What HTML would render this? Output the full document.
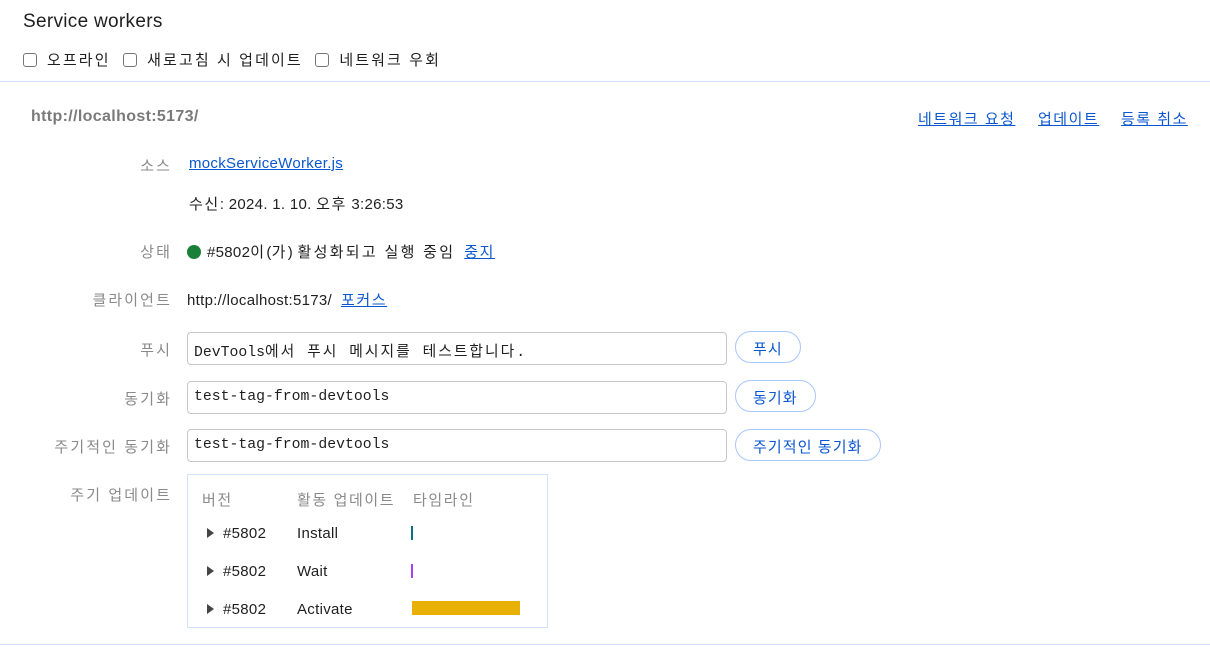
<!DOCTYPE html>
<html><head><meta charset="utf-8"><style>
*{box-sizing:border-box;margin:0;padding:0}
body{width:1210px;height:652px;background:#fff;font-family:"Liberation Sans","Noto Sans CJK KR",sans-serif;font-size:15px;letter-spacing:.3px;color:#1f1f1f;position:relative;overflow:hidden}
.k{letter-spacing:1.6px}
.a{position:absolute;white-space:nowrap}
.lbl{position:absolute;right:1040px;color:#8a8a8a;text-align:right;white-space:nowrap;letter-spacing:2.1px;margin-right:-2px}
a{color:#0b57d0;text-decoration:underline}
.cb{display:inline-block;width:14px;height:14px;border:1.5px solid #757575;border-radius:3px;vertical-align:-2px;margin-right:10px}
.inp{position:absolute;left:187px;width:540px;height:33px;border:1px solid #c7c7c7;border-radius:4px;font-family:"Liberation Mono","Noto Sans CJK KR",monospace;font-size:14.8px;letter-spacing:0;padding:7px 6px;color:#1f1f1f}
.inp .k{letter-spacing:2px}
.btn{position:absolute;left:735px;height:32px;border:1px solid #a8c7fa;border-radius:16px;color:#0b57d0;padding:2px 17px 0;display:flex;align-items:center;letter-spacing:1.1px;white-space:nowrap}
.tri{display:inline-block;width:0;height:0;border-left:7px solid #444;border-top:5px solid transparent;border-bottom:5px solid transparent;margin-right:9px}
</style></head><body>
<div class="a" style="left:23px;top:11px;font-size:19px;letter-spacing:.3px">Service workers</div>
<div class="a" style="left:23px;top:49px;font-size:15px;letter-spacing:2.1px"><span class="cb"></span>오프라인 &nbsp;<span class="cb"></span>새로고침 시 업데이트 &nbsp;<span class="cb"></span>네트워크 우회</div>
<div class="a" style="left:0;top:81px;width:1210px;height:1px;background:#d3e3fd"></div>
<div class="a" style="left:31px;top:108px;font-weight:bold;color:#7a7a7a;font-size:16px;letter-spacing:.35px">http://localhost:5173/</div>
<div class="a" style="left:918px;top:108px;letter-spacing:1.5px"><a>네트워크 요청</a></div>
<div class="a" style="left:1038px;top:108px;letter-spacing:1.5px"><a>업데이트</a></div>
<div class="a" style="left:1121px;top:108px;letter-spacing:1.5px"><a>등록 취소</a></div>

<div class="lbl" style="top:155px">소스</div>
<div class="a" style="left:189px;top:155px"><a>mockServiceWorker.js</a></div>
<div class="a" style="left:189px;top:193px"><span class="k">수신</span>: 2024. 1. 10. <span class="k">오후</span> 3:26:53</div>

<div class="lbl" style="top:241px">상태</div>
<div class="a" style="left:187px;top:241px"><span style="display:inline-block;width:14px;height:14px;border-radius:50%;background:#188038;vertical-align:-2px;margin-right:6px"></span>#5802<span class="k" style="letter-spacing:2.3px">이</span>(<span class="k" style="letter-spacing:2.3px">가</span>) <span style="letter-spacing:2.3px">활성화되고 실행 중임</span> &nbsp;<a class="k">중지</a></div>

<div class="lbl" style="top:289px">클라이언트</div>
<div class="a" style="left:187px;top:289px">http://localhost:5173/ &nbsp;<a class="k">포커스</a></div>

<div class="lbl" style="top:339px">푸시</div>
<div class="inp" style="top:332px">DevTools<span class="k">에서 푸시 메시지를 테스트합니다</span>.</div>
<div class="btn" style="top:331px">푸시</div>

<div class="lbl" style="top:388px">동기화</div>
<div class="inp" style="top:381px">test-tag-from-devtools</div>
<div class="btn" style="top:380px">동기화</div>

<div class="lbl" style="top:436px">주기적인 동기화</div>
<div class="inp" style="top:429px">test-tag-from-devtools</div>
<div class="btn" style="top:429px">주기적인 동기화</div>

<div class="lbl" style="top:484px">주기 업데이트</div>
<div class="a" style="left:187px;top:474px;width:361px;height:154px;border:1px solid #d3e3fd"></div>
<div class="a k" style="left:202px;top:489px;color:#8a8a8a">버전</div>
<div class="a k" style="left:297px;top:489px;color:#8a8a8a">활동 업데이트</div>
<div class="a k" style="left:413px;top:489px;color:#8a8a8a">타임라인</div>

<div class="a" style="left:207px;top:525px"><span class="tri"></span>#5802</div>
<div class="a" style="left:297px;top:525px">Install</div>
<div class="a" style="left:411px;top:526px;width:2px;height:14px;background:#0b7285"></div>

<div class="a" style="left:207px;top:563px"><span class="tri"></span>#5802</div>
<div class="a" style="left:297px;top:563px">Wait</div>
<div class="a" style="left:411px;top:564px;width:2px;height:14px;background:#a142f4"></div>

<div class="a" style="left:207px;top:601px"><span class="tri"></span>#5802</div>
<div class="a" style="left:297px;top:601px">Activate</div>
<div class="a" style="left:412px;top:601px;width:108px;height:14px;background:#e8b007"></div>

<div class="a" style="left:0;top:644px;width:1210px;height:1px;background:#d3e3fd"></div>
</body></html>
